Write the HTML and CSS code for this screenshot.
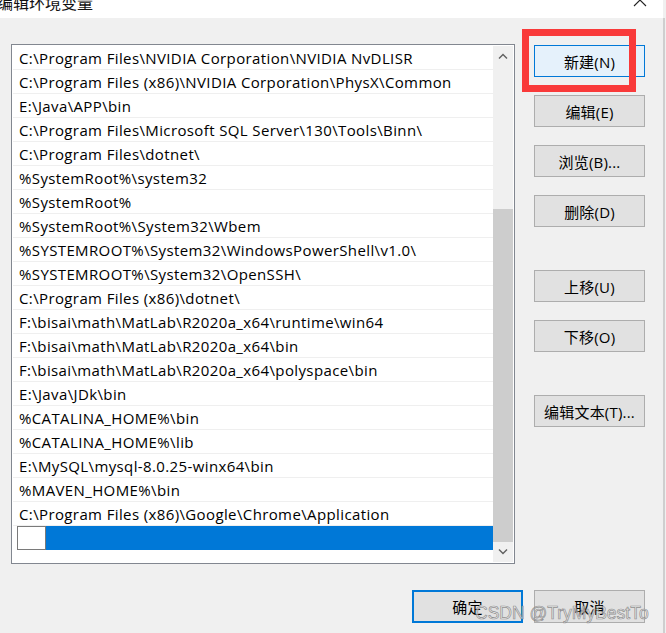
FILE: index.html
```html
<!DOCTYPE html>
<html lang="zh-CN">
<head>
<meta charset="utf-8">
<title>编辑环境变量</title>
<link rel="stylesheet" href="styles.css">
</head>
<body>
<div class="page">
  <div class="window">
    <div class="titlebar">
      <span class="title">编辑环境变量</span>
      <svg class="close" width="14" height="8" viewBox="0 0 14 8"><path d="M1 7 L7 1 L13 7" fill="none" stroke="#222" stroke-width="1.1"/></svg>
    </div>
    <div class="content">
      <div class="listbox">
        <div class="rows">
          <div class="row">C:\Program Files\NVIDIA Corporation\NVIDIA NvDLISR</div>
          <div class="row">C:\Program Files (x86)\NVIDIA Corporation\PhysX\Common</div>
          <div class="row">E:\Java\APP\bin</div>
          <div class="row">C:\Program Files\Microsoft SQL Server\130\Tools\Binn\</div>
          <div class="row">C:\Program Files\dotnet\</div>
          <div class="row">%SystemRoot%\system32</div>
          <div class="row">%SystemRoot%</div>
          <div class="row">%SystemRoot%\System32\Wbem</div>
          <div class="row">%SYSTEMROOT%\System32\WindowsPowerShell\v1.0\</div>
          <div class="row">%SYSTEMROOT%\System32\OpenSSH\</div>
          <div class="row">C:\Program Files (x86)\dotnet\</div>
          <div class="row">F:\bisai\math\MatLab\R2020a_x64\runtime\win64</div>
          <div class="row">F:\bisai\math\MatLab\R2020a_x64\bin</div>
          <div class="row">F:\bisai\math\MatLab\R2020a_x64\polyspace\bin</div>
          <div class="row">E:\Java\JDk\bin</div>
          <div class="row">%CATALINA_HOME%\bin</div>
          <div class="row">%CATALINA_HOME%\lib</div>
          <div class="row">E:\MySQL\mysql-8.0.25-winx64\bin</div>
          <div class="row">%MAVEN_HOME%\bin</div>
          <div class="row">C:\Program Files (x86)\Google\Chrome\Application</div>
          <div class="row-edit"><span class="edit-box"></span><span class="edit-sel"></span></div>
        </div>
        <div class="scrollbar">
          <div class="arrow"><svg width="10" height="6" viewBox="0 0 10 6"><path d="M1 5.5 L5 1.5 L9 5.5" fill="none" stroke="#606060" stroke-width="1.4"/></svg></div>
          <div class="track"><div class="thumb"></div></div>
          <div class="arrow"><svg width="10" height="6" viewBox="0 0 10 6"><path d="M1 0.5 L5 4.5 L9 0.5" fill="none" stroke="#606060" stroke-width="1.4"/></svg></div>
        </div>
      </div>
      <div class="actions">
        <button class="btn focus">新建(N)</button>
        <button class="btn">编辑(E)</button>
        <button class="btn">浏览(B)...</button>
        <button class="btn">删除(D)</button>
        <button class="btn group">上移(U)</button>
        <button class="btn">下移(O)</button>
        <button class="btn group">编辑文本(T)...</button>
      </div>
    </div>
    <div class="footer">
      <button class="btn default">确定</button>
      <button class="btn">取消</button>
    </div>
  </div>
  <div class="edge"></div>
</div>
<div class="highlight"></div>
<div class="watermark">CSDN @TryMyBestTo</div>
</body>
</html>
```
FILE: styles.css
```css
* { box-sizing: border-box; }
html, body {
  margin: 0;
  padding: 0;
  width: 666px;
  height: 633px;
  overflow: hidden;
  background: #f0f0f0;
  font-family: "Open Sans", "Noto Sans CJK SC", sans-serif;
  font-size: 15px;
  color: #000;
}
.page {
  display: flex;
  height: 633px;
}
.window {
  width: 663px;
  display: flex;
  flex-direction: column;
}
.edge {
  width: 3px;
  margin-top: 18px;
  border-left: 2px solid #cfcfcf;
}
.titlebar {
  height: 18px;
  background: #fff;
  display: flex;
  justify-content: space-between;
  overflow: hidden;
}
.title {
  display: block;
  margin: -10px 0 0 -3px;
  font-family: "Noto Sans CJK SC", sans-serif;
  font-size: 16px;
  line-height: 24px;
  color: #111;
}
.close {
  margin: -1px 16px 0 0;
}
.content {
  display: flex;
  padding: 26px 0 0 11px;
}
.listbox {
  width: 504px;
  height: 520px;
  border: 1px solid #828790;
  background: #fff;
  padding: 1px;
  display: flex;
}
.rows {
  flex: 1;
  display: flex;
  flex-direction: column;
}
.row {
  height: 24px;
  line-height: 23px;
  padding: 1px 0 0 6px;
  letter-spacing: 0.38px;
  border-bottom: 1px solid #efefef;
  white-space: nowrap;
  overflow: hidden;
}
.row-edit {
  height: 24px;
  display: flex;
}
.edit-box {
  width: 29px;
  margin-left: 4px;
  border: 1px solid #7a7a7a;
  background: #fff;
}
.edit-sel {
  flex: 1;
  background: #0078d7;
}
.scrollbar {
  width: 20px;
  background: #f0f0f0;
  display: flex;
  flex-direction: column;
}
.arrow {
  height: 20px;
  display: flex;
  align-items: center;
  justify-content: center;
}
.track {
  flex: 1;
  display: flex;
  flex-direction: column;
  padding-top: 143px;
}
.thumb {
  flex: 1;
  background: #cdcdcd;
}
.actions {
  display: flex;
  flex-direction: column;
  gap: 18px;
  margin: 1px 0 0 19px;
}
.btn {
  width: 111px;
  height: 32px;
  background: #e1e1e1;
  border: 1px solid #adadad;
  font-family: "Open Sans", "Noto Sans CJK SC", sans-serif;
  font-size: 15px;
  letter-spacing: 0.2px;
  color: #000;
  padding: 0;
  border-radius: 0;
}
.btn.group {
  margin-top: 25px;
}
.btn.focus {
  background: #e5f1fb;
  border-color: #0078d7;
}
.footer {
  display: flex;
  justify-content: flex-end;
  gap: 11px;
  padding: 26px 18px 0 0;
}
.footer .btn {
  height: 33px;
}
.btn.default {
  border: 2px solid #0078d7;
}
.highlight {
  position: absolute;
  left: 522px;
  top: 29px;
  width: 114px;
  height: 63px;
  border: 7px solid #f93a3a;
}
.watermark {
  position: absolute;
  left: 475px;
  top: 603px;
  font-family: "Liberation Sans", sans-serif;
  font-size: 17.5px;
  line-height: 20px;
  color: rgba(245, 245, 245, 0.55);
  -webkit-text-stroke: 0.7px rgba(125, 125, 125, 0.85);
}
```
